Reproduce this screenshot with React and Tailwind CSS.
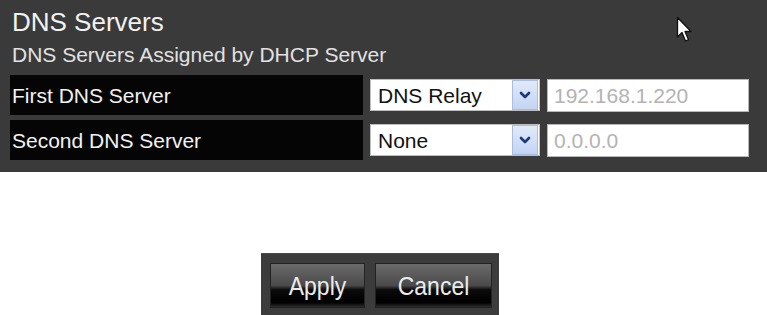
import React from 'react';

const font = { fontFamily: '"Liberation Sans", Arial, sans-serif' };

function Chevron() {
    return (
        <svg width="12" height="10" viewBox="0 0 12 10">
            <path d="M2 3 L6 7 L10 3" fill="none" stroke="#1d3a7a" strokeWidth="2.6" strokeLinecap="round" strokeLinejoin="round" />
        </svg>
    );
}

function SelectBox({ value }) {
    return (
        <div className="h-[32px] w-[170px] bg-white border border-[#bdbdbd] flex items-center justify-between pl-[7px] pr-px">
            <span className="text-[21px] text-[#111] leading-none">{value}</span>
            <div className="h-[30px] w-[26px] flex items-center justify-center border border-[#a9bde3] bg-[linear-gradient(180deg,#e1eafa_0%,#c3d4f3_100%)]">
                <Chevron />
            </div>
        </div>
    );
}

function IpInput({ value }) {
    return (
        <div className="h-[33px] w-[202px] bg-white border border-[#b8b8b8] flex items-center pl-[6px]">
            <span className="text-[21px] text-[#b3b3b3] leading-none">{value}</span>
        </div>
    );
}

function Row({ label, select, ip }) {
    return (
        <div className="flex items-center h-[40px]">
            <div className="w-[353px] h-full bg-[#050505] flex items-center pl-[2px]">
                <span className="text-[21px] text-[#f2f2f2] leading-none">{label}</span>
            </div>
            <div className="ml-[7px]"><SelectBox value={select} /></div>
            <div className="ml-[7px]"><IpInput value={ip} /></div>
        </div>
    );
}

function Cursor() {
    return (
        <svg className="absolute left-[676px] top-[16px]" width="18" height="28" viewBox="0 0 18 28">
            <path d="M1.5 1.5 L1.5 21 L6 16.5 L9.5 25 L12.5 23.7 L9 15.5 L15 15.5 Z" fill="#fff" stroke="#111" strokeWidth="1.3" strokeLinejoin="round" />
        </svg>
    );
}

function GlossButton({ children, width }) {
    return (
        <button className={`${width} h-[45px] flex items-center justify-center border border-[#222] bg-[linear-gradient(180deg,#6a6a6a_0%,#4a4a4a_50%,#0a0a0a_60%,#000_90%,#2e2e2e_100%)]`}>
            <span className="inline-block text-[23px] text-[#ececec] leading-none scale-y-115 translate-y-[1px]">{children}</span>
        </button>
    );
}

export default function App() {
    return (
        <div className="w-[767px] h-[315px] bg-white overflow-hidden" style={font}>
            <div className="relative h-[172px] bg-[#3a3a3a] pl-[10px] pt-[9px]">
                <Cursor />
                <div className="text-[26px] leading-[26px] text-[#f2f2f2] pl-[2px]">DNS Servers</div>
                <div className="mt-[9px] text-[21px] leading-[21px] text-[#e2e2e2] pl-[2px]">DNS Servers Assigned by DHCP Server</div>
                <div className="mt-[10px] flex flex-col gap-[5px]">
                    <Row label="First DNS Server" select="DNS Relay" ip="192.168.1.220" />
                    <Row label="Second DNS Server" select="None" ip="0.0.0.0" />
                </div>
            </div>
            <div className="mt-[81px] ml-[261px] w-[238px] h-[70px] bg-[#3c3c3c] border-t border-[#4a4a4a] pt-[9px] pl-[9px] flex gap-[10px]">
                <GlossButton width="w-[95px]">Apply</GlossButton>
                <GlossButton width="w-[117px]">Cancel</GlossButton>
            </div>
        </div>
    );
}
